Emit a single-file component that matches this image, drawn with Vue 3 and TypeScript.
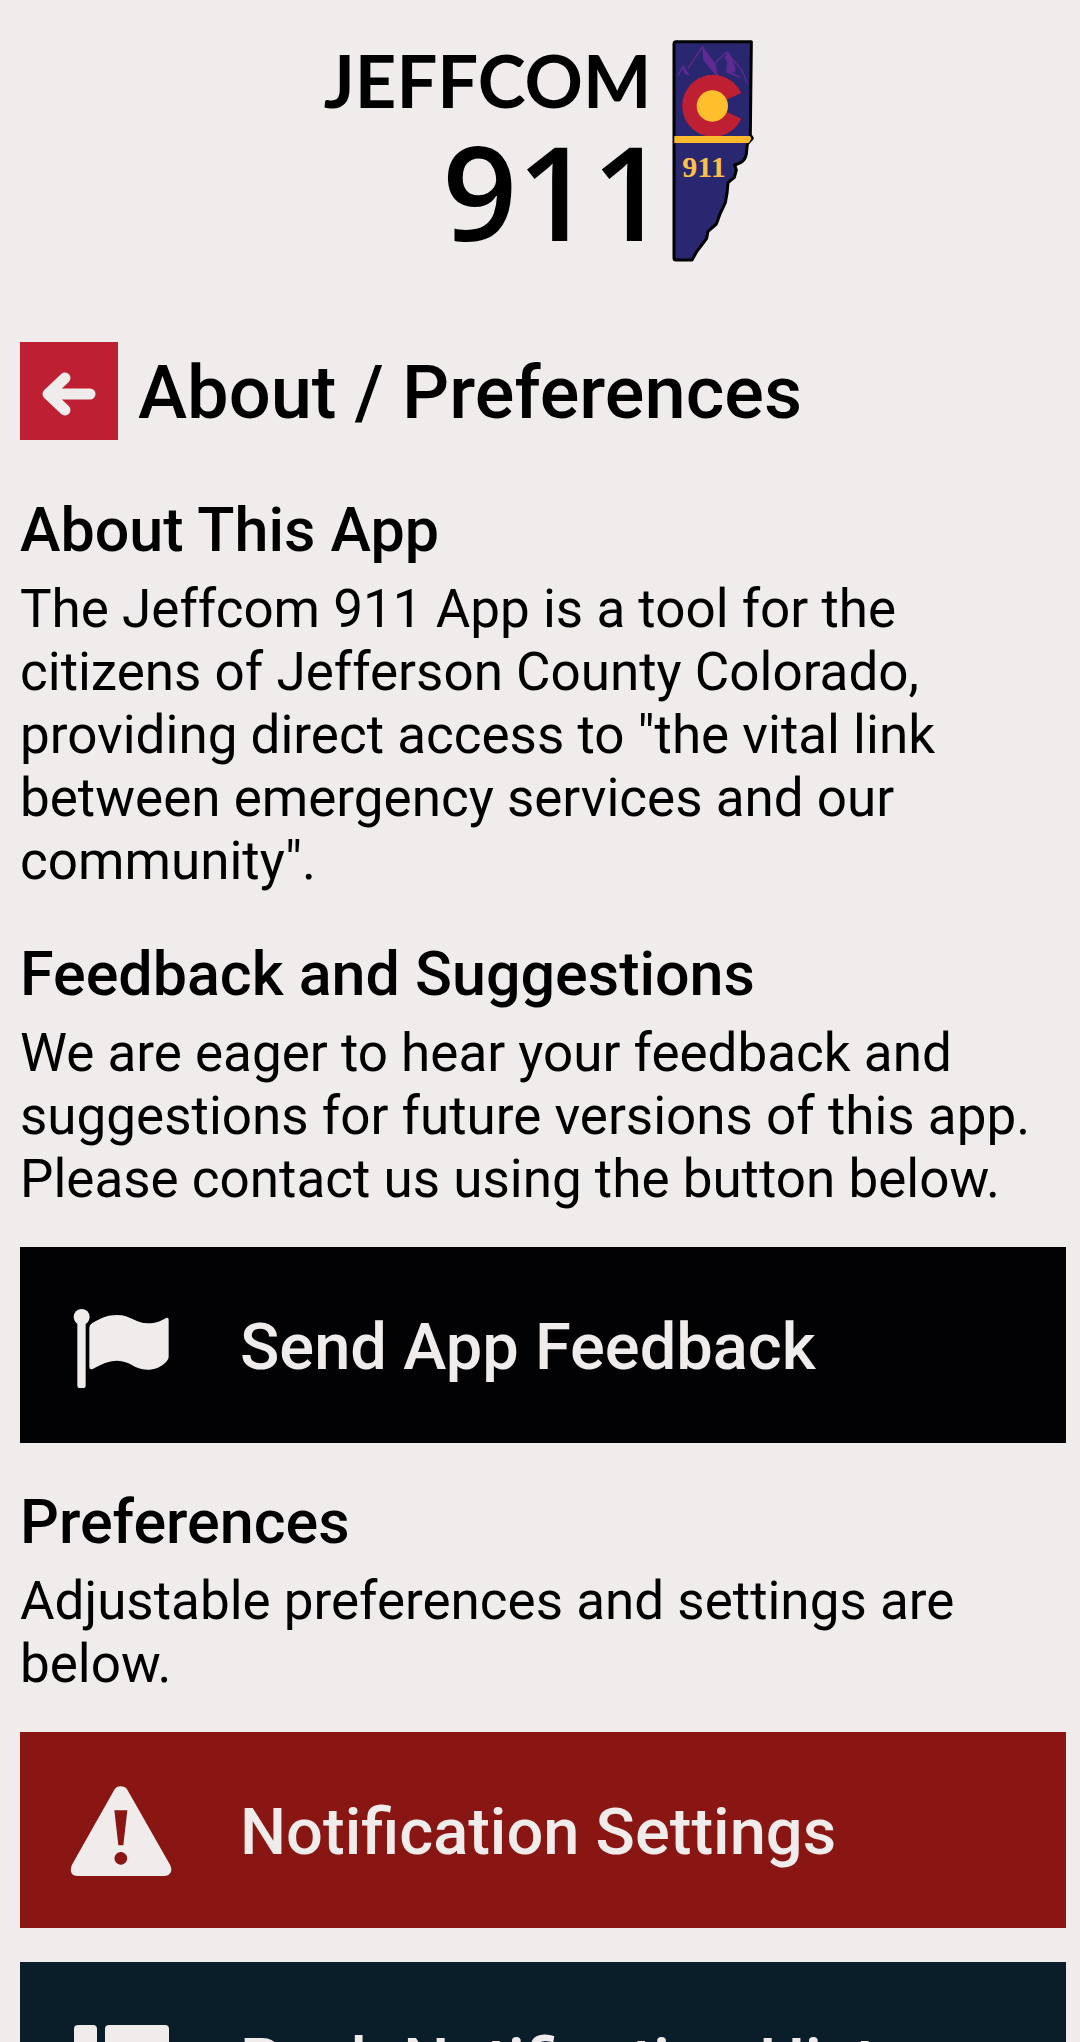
<script setup lang="ts">
type IconName = 'flag' | 'alert' | 'list'

interface Action {
  label: string
  icon: IconName
  tone: string
}

interface Section {
  title: string
  text: string
  actions: Action[]
}

const sections: Section[] = [
  {
    title: 'About This App',
    text: 'The Jeffcom 911 App is a tool for the citizens of Jefferson County Colorado, providing direct access to "the vital link between emergency services and our community".',
    actions: [],
  },
  {
    title: 'Feedback and Suggestions',
    text: 'We are eager to hear your feedback and suggestions for future versions of this app. Please contact us using the button below.',
    actions: [{ label: 'Send App Feedback', icon: 'flag', tone: 'black' }],
  },
  {
    title: 'Preferences',
    text: 'Adjustable preferences and settings are below.',
    actions: [
      { label: 'Notification Settings', icon: 'alert', tone: 'red' },
      { label: 'Push Notification History', icon: 'list', tone: 'navy' },
    ],
  },
]
</script>

<template>
  <div class="screen">
    <header class="brand">
      <svg class="logo" viewBox="0 0 1380 780" role="img" aria-label="Jeffcom 911">
        <text class="logo-name" x="1024" y="263" text-anchor="end">JEFFCOM</text>
        <text class="logo-number" x="1070" y="663" text-anchor="end">911</text>
        <path
          d="M1098 65H1324L1321 345L1327 355L1312 372L1309 402Q1306 420 1292 428L1274 435L1279 450L1273 472L1254 488L1251 520L1246 548L1231 580L1219 612L1194 634L1190 655L1175 675L1160 695L1146 720H1098Q1092 720 1092 713V72Q1092 65 1098 65Z"
          fill="#29276f" stroke="#000" stroke-width="9" stroke-linejoin="round"
        />
        <g fill="#5f2a91" stroke="#5f2a91" stroke-width="4" stroke-linejoin="round">
          <path d="M1104 166L1119 139L1136 164L1126 160L1119 143" />
          <path d="M1134 146L1177 80L1213 131L1250 95L1296 152L1312 190" fill="none" />
          <path d="M1179 86L1200 114L1216 136L1222 166L1206 150L1182 120Z" />
          <path d="M1254 98L1270 130L1276 152L1262 156L1290 172L1250 156L1254 128L1246 112Z" />
        </g>
        <path d="M1294 219A93 93 0 1 0 1294 296L1246 274V241Z" fill="#bf1f33" />
        <circle cx="1207" cy="258" r="47" fill="#fdc02c" />
        <path d="M1093 348H1320L1324 356L1316 369H1093Z" fill="#fdb92c" />
        <text class="logo-badge" x="1182" y="471" text-anchor="middle">911</text>
      </svg>
    </header>

    <main class="content">
      <div class="title-bar">
        <button class="back" type="button" aria-label="Back">
          <svg viewBox="0 0 98 98" aria-hidden="true">
            <path d="M70 52H30M45 36L28 52L45 68" />
          </svg>
        </button>
        <h1>About / Preferences</h1>
      </div>

      <section v-for="section in sections" :key="section.title">
        <h2>{{ section.title }}</h2>
        <p>{{ section.text }}</p>
        <button
          v-for="action in section.actions"
          :key="action.label"
          type="button"
          class="action"
          :class="action.tone"
        >
          <svg v-if="action.icon === 'flag'" viewBox="30 30 306 276" aria-hidden="true">
            <circle cx="65" cy="84" r="24" />
            <path d="M52 95H77V290Q77 297 71 297H58Q52 297 52 290Z" />
            <path d="M88 116Q88 108 96 103C120 88 143 78 170 78C214 78 226 103 264 103C287 103 300 97 318 87Q326 84 326 92V204Q326 212 319 218C302 235 283 242 262 242C222 242 212 215 171 215C145 215 122 227 98 240Q88 243 88 234Z" />
          </svg>
          <svg v-else-if="action.icon === 'alert'" viewBox="30 44 306 276" aria-hidden="true">
            <path
              fill-rule="evenodd"
              d="M163 61Q170 51 182 51Q195 51 202 61L330 286Q338 302 330 312Q325 320 313 320H52Q40 320 35 312Q29 302 36 286ZM163 123L175 228H190L202 123ZM182 248A19 19 0 1 0 183 248Z"
            />
          </svg>
          <svg v-else viewBox="0 0 102 92" aria-hidden="true">
            <rect x="4" y="11" width="23" height="20" rx="4" />
            <rect x="35" y="11" width="64" height="20" rx="4" />
            <rect x="4" y="36" width="23" height="20" rx="4" />
            <rect x="35" y="36" width="64" height="20" rx="4" />
            <rect x="4" y="61" width="23" height="20" rx="4" />
            <rect x="35" y="61" width="64" height="20" rx="4" />
          </svg>
          <span>{{ action.label }}</span>
        </button>
      </section>
    </main>
  </div>
</template>

<style>
body {
  margin: 0;
  background: #efeceb;
}
</style>

<style scoped>
.screen {
  box-sizing: border-box;
  height: 100vh;
  overflow: hidden;
  background: #efeceb;
  color: #000;
  font-family: Roboto, "Noto Sans", sans-serif;
}

.brand {
  display: flex;
  justify-content: center;
  padding-top: 20px;
}

.logo {
  width: 460px;
  height: 260px;
}

.logo-name {
  font: 700 217px Lato, sans-serif;
}

.logo-number {
  font: 600 392px "Open Sans", "Noto Sans", sans-serif;
}

.logo-badge {
  font: 700 90px "Liberation Serif", serif;
  fill: #fdc04a;
}

.content {
  padding: 62px 14px 0 20px;
}

.title-bar {
  display: flex;
  align-items: center;
  gap: 20px;
  margin-bottom: 45px;
}

.back {
  flex: none;
  width: 98px;
  height: 98px;
  padding: 0;
  border: 0;
  background: #bf1f33;
}

.back svg {
  display: block;
  fill: none;
  stroke: #efeceb;
  stroke-width: 11;
  stroke-linecap: round;
  stroke-linejoin: round;
}

h1 {
  margin: 0;
  padding-top: 4px;
  font-size: 74px;
  font-weight: 500;
  line-height: 90px;
}

h2 {
  margin: 0;
  padding: 7px 0 10px;
  font-size: 61px;
  font-weight: 500;
  line-height: 76px;
}

p {
  margin: 0 0 36px;
  font-size: 53px;
  line-height: 63px;
}

.action {
  display: flex;
  align-items: center;
  gap: 68px;
  width: 100%;
  height: 196px;
  margin: 0 0 34px;
  padding: 0 50px;
  border: 0;
  color: #efeceb;
  font-family: inherit;
  font-size: 65px;
  font-weight: 500;
  text-align: left;
}

.action svg {
  flex: none;
  width: 102px;
  height: 92px;
  fill: currentColor;
}

.action span {
  padding-top: 4px;
}

.black {
  background: #020204;
}

.red {
  background: #891613;
}

.navy {
  background: #0a1e2a;
}
</style>
